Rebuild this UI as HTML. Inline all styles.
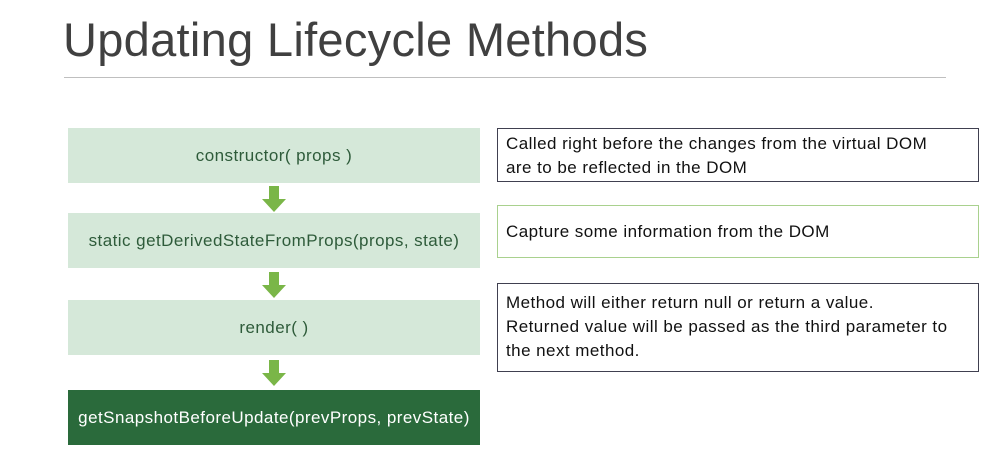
<!DOCTYPE html>
<html><head><style>
body{margin:0;width:1006px;height:465px;background:#fff;position:relative;overflow:hidden;font-family:"Liberation Sans",sans-serif;}
.t{position:absolute;left:63px;top:12px;font-size:47px;color:#404040;letter-spacing:0.3px}
.hr{position:absolute;left:64px;top:77px;width:882px;height:1px;background:#bfbfbf}
.l{position:absolute;left:68px;width:412px;height:55px;background:#d5e8d9;color:#2e5b3a;font-size:17px;letter-spacing:0.45px;display:flex;align-items:center;justify-content:center;white-space:nowrap}
.d{background:#2a6a3b;color:#fff}
.a{position:absolute;left:262px;width:24px;height:26px}
.r{position:absolute;left:497px;width:482px;border:1.5px solid #404050;box-sizing:border-box;font-size:17px;letter-spacing:0.45px;color:#111;padding:4px 8px;line-height:24px;white-space:nowrap}
</style></head><body>
<div class="t">Updating Lifecycle Methods</div>
<div class="hr"></div>
<div class="l" style="top:128px">constructor( props )</div>
<div class="l" style="top:213px">static getDerivedStateFromProps(props, state)</div>
<div class="l" style="top:300px">render( )</div>
<div class="l d" style="top:390px">getSnapshotBeforeUpdate(prevProps, prevState)</div>
<svg class="a" style="top:186px" viewBox="0 0 24 26"><path d="M7 0H17V13H24L12 26L0 13H7Z" fill="#7ab648"/></svg>
<svg class="a" style="top:272px" viewBox="0 0 24 26"><path d="M7 0H17V13H24L12 26L0 13H7Z" fill="#7ab648"/></svg>
<svg class="a" style="top:360px" viewBox="0 0 24 26"><path d="M7 0H17V13H24L12 26L0 13H7Z" fill="#7ab648"/></svg>
<div class="r" style="top:128px;height:54px;padding-top:3px">Called right before the changes from the virtual DOM<br>are to be reflected in the DOM</div>
<div class="r" style="top:205px;height:53px;border-color:#a9d18e;padding-top:14px">Capture some information from the DOM</div>
<div class="r" style="top:283px;height:89px;padding-top:7px">Method will either return null or return a value.<br>Returned value will be passed as the third parameter to<br>the next method.</div>
</body></html>
